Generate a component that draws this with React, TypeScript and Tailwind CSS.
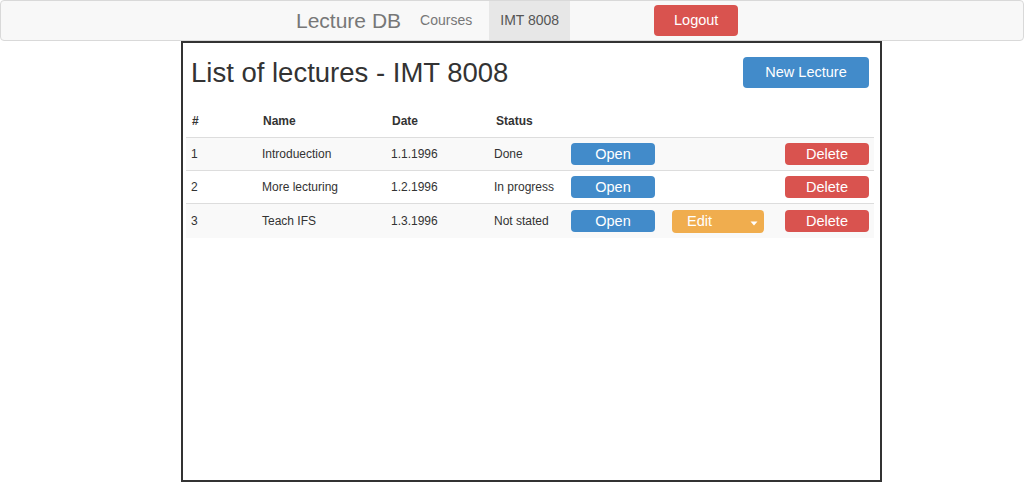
type Lecture = {
  id: number;
  name: string;
  date: string;
  status: string;
  editable?: boolean;
};

const lectures: Lecture[] = [
  { id: 1, name: "Introduection", date: "1.1.1996", status: "Done" },
  { id: 2, name: "More lecturing", date: "1.2.1996", status: "In progress" },
  { id: 3, name: "Teach IFS", date: "1.3.1996", status: "Not stated", editable: true },
];

const cols = "grid grid-cols-[71px_129px_103px_77px_101px_113px_94px] items-center";

function NavBar() {
  return (
    <nav className="flex h-[41px] items-stretch rounded-[4px] border border-[#d9d9d9] bg-[#f8f8f8]">
      <div className="flex items-center pl-[295px] text-[21px] text-[#777]">Lecture DB</div>
      <div className="ml-[8px] flex items-stretch text-[14px] text-[#777]">
        <a className="flex items-center pl-[11px] pr-[17px]">Courses</a>
        <a className="flex w-[81px] items-center justify-center bg-[#e7e7e7] text-[#555]">IMT 8008</a>
      </div>
      <button className="ml-[84px] h-[31px] w-[84px] self-center rounded-[4px] bg-[#d9534f] text-[14.5px] text-white">
        Logout
      </button>
    </nav>
  );
}

function LectureRow({ lecture, striped }: { lecture: Lecture; striped: boolean }) {
  return (
    <div
      className={`${cols} text-[12px] text-[#333] ${striped ? "bg-[#f9f9f9]" : ""} ${
        lecture.editable ? "h-[34px]" : "h-[33px] border-b border-[#ddd]"
      }`}
    >
      <div className="pl-[5px]">{lecture.id}</div>
      <div className="pl-[5px]">{lecture.name}</div>
      <div className="pl-[5px]">{lecture.date}</div>
      <div className="pl-[5px]">{lecture.status}</div>
      <div className="pl-[5px]">
        <button className="h-[22px] w-[84px] rounded-[4px] bg-[#428bca] text-[14.5px] leading-none text-white">
          Open
        </button>
      </div>
      <div className="pl-[5px]">
        {lecture.editable && (
          <button className="flex h-[23px] w-[92px] items-center justify-between rounded-[4px] bg-[#f0ad4e] pl-[15px] pr-[6px] text-[14.5px] leading-none text-white">
            <span>Edit</span>
            <svg width="8" height="5" viewBox="0 0 8 5" className="mt-[5px]">
              <path d="M0.5 0.5 L7.5 0.5 L4 4.5 Z" fill="white" />
            </svg>
          </button>
        )}
      </div>
      <div className="pl-[5px]">
        <button className="h-[22px] w-[84px] rounded-[4px] bg-[#d9534f] text-[14.5px] leading-none text-white">
          Delete
        </button>
      </div>
    </div>
  );
}

export default function App() {
  return (
    <div className="h-[482px] w-[1024px] bg-white font-['Liberation_Sans',Arial,sans-serif]">
      <NavBar />
      <main className="ml-[181px] h-[441px] w-[701px] border-2 border-[#333]">
        <div className="flex items-start justify-between pl-[8px] pr-[11px] pt-[14px]">
          <h2 className="mt-[1px] text-[27.5px] leading-[30px] text-[#333]">List of lectures - IMT 8008</h2>
          <button className="h-[31px] w-[126px] rounded-[4px] bg-[#428bca] text-[14.5px] text-white">
            New Lecture
          </button>
        </div>
        <div className="ml-[3px] mt-[16px] w-[688px]">
          <div className={`${cols} h-[34px] border-b border-[#ddd] text-[12px] font-bold text-[#333]`}>
            <div className="pl-[6px]">#</div>
            <div className="pl-[6px]">Name</div>
            <div className="pl-[6px]">Date</div>
            <div className="pl-[7px]">Status</div>
            <div />
            <div />
            <div />
          </div>
          {lectures.map((l, i) => (
            <LectureRow key={l.id} lecture={l} striped={i % 2 === 0} />
          ))}
        </div>
      </main>
    </div>
  );
}
